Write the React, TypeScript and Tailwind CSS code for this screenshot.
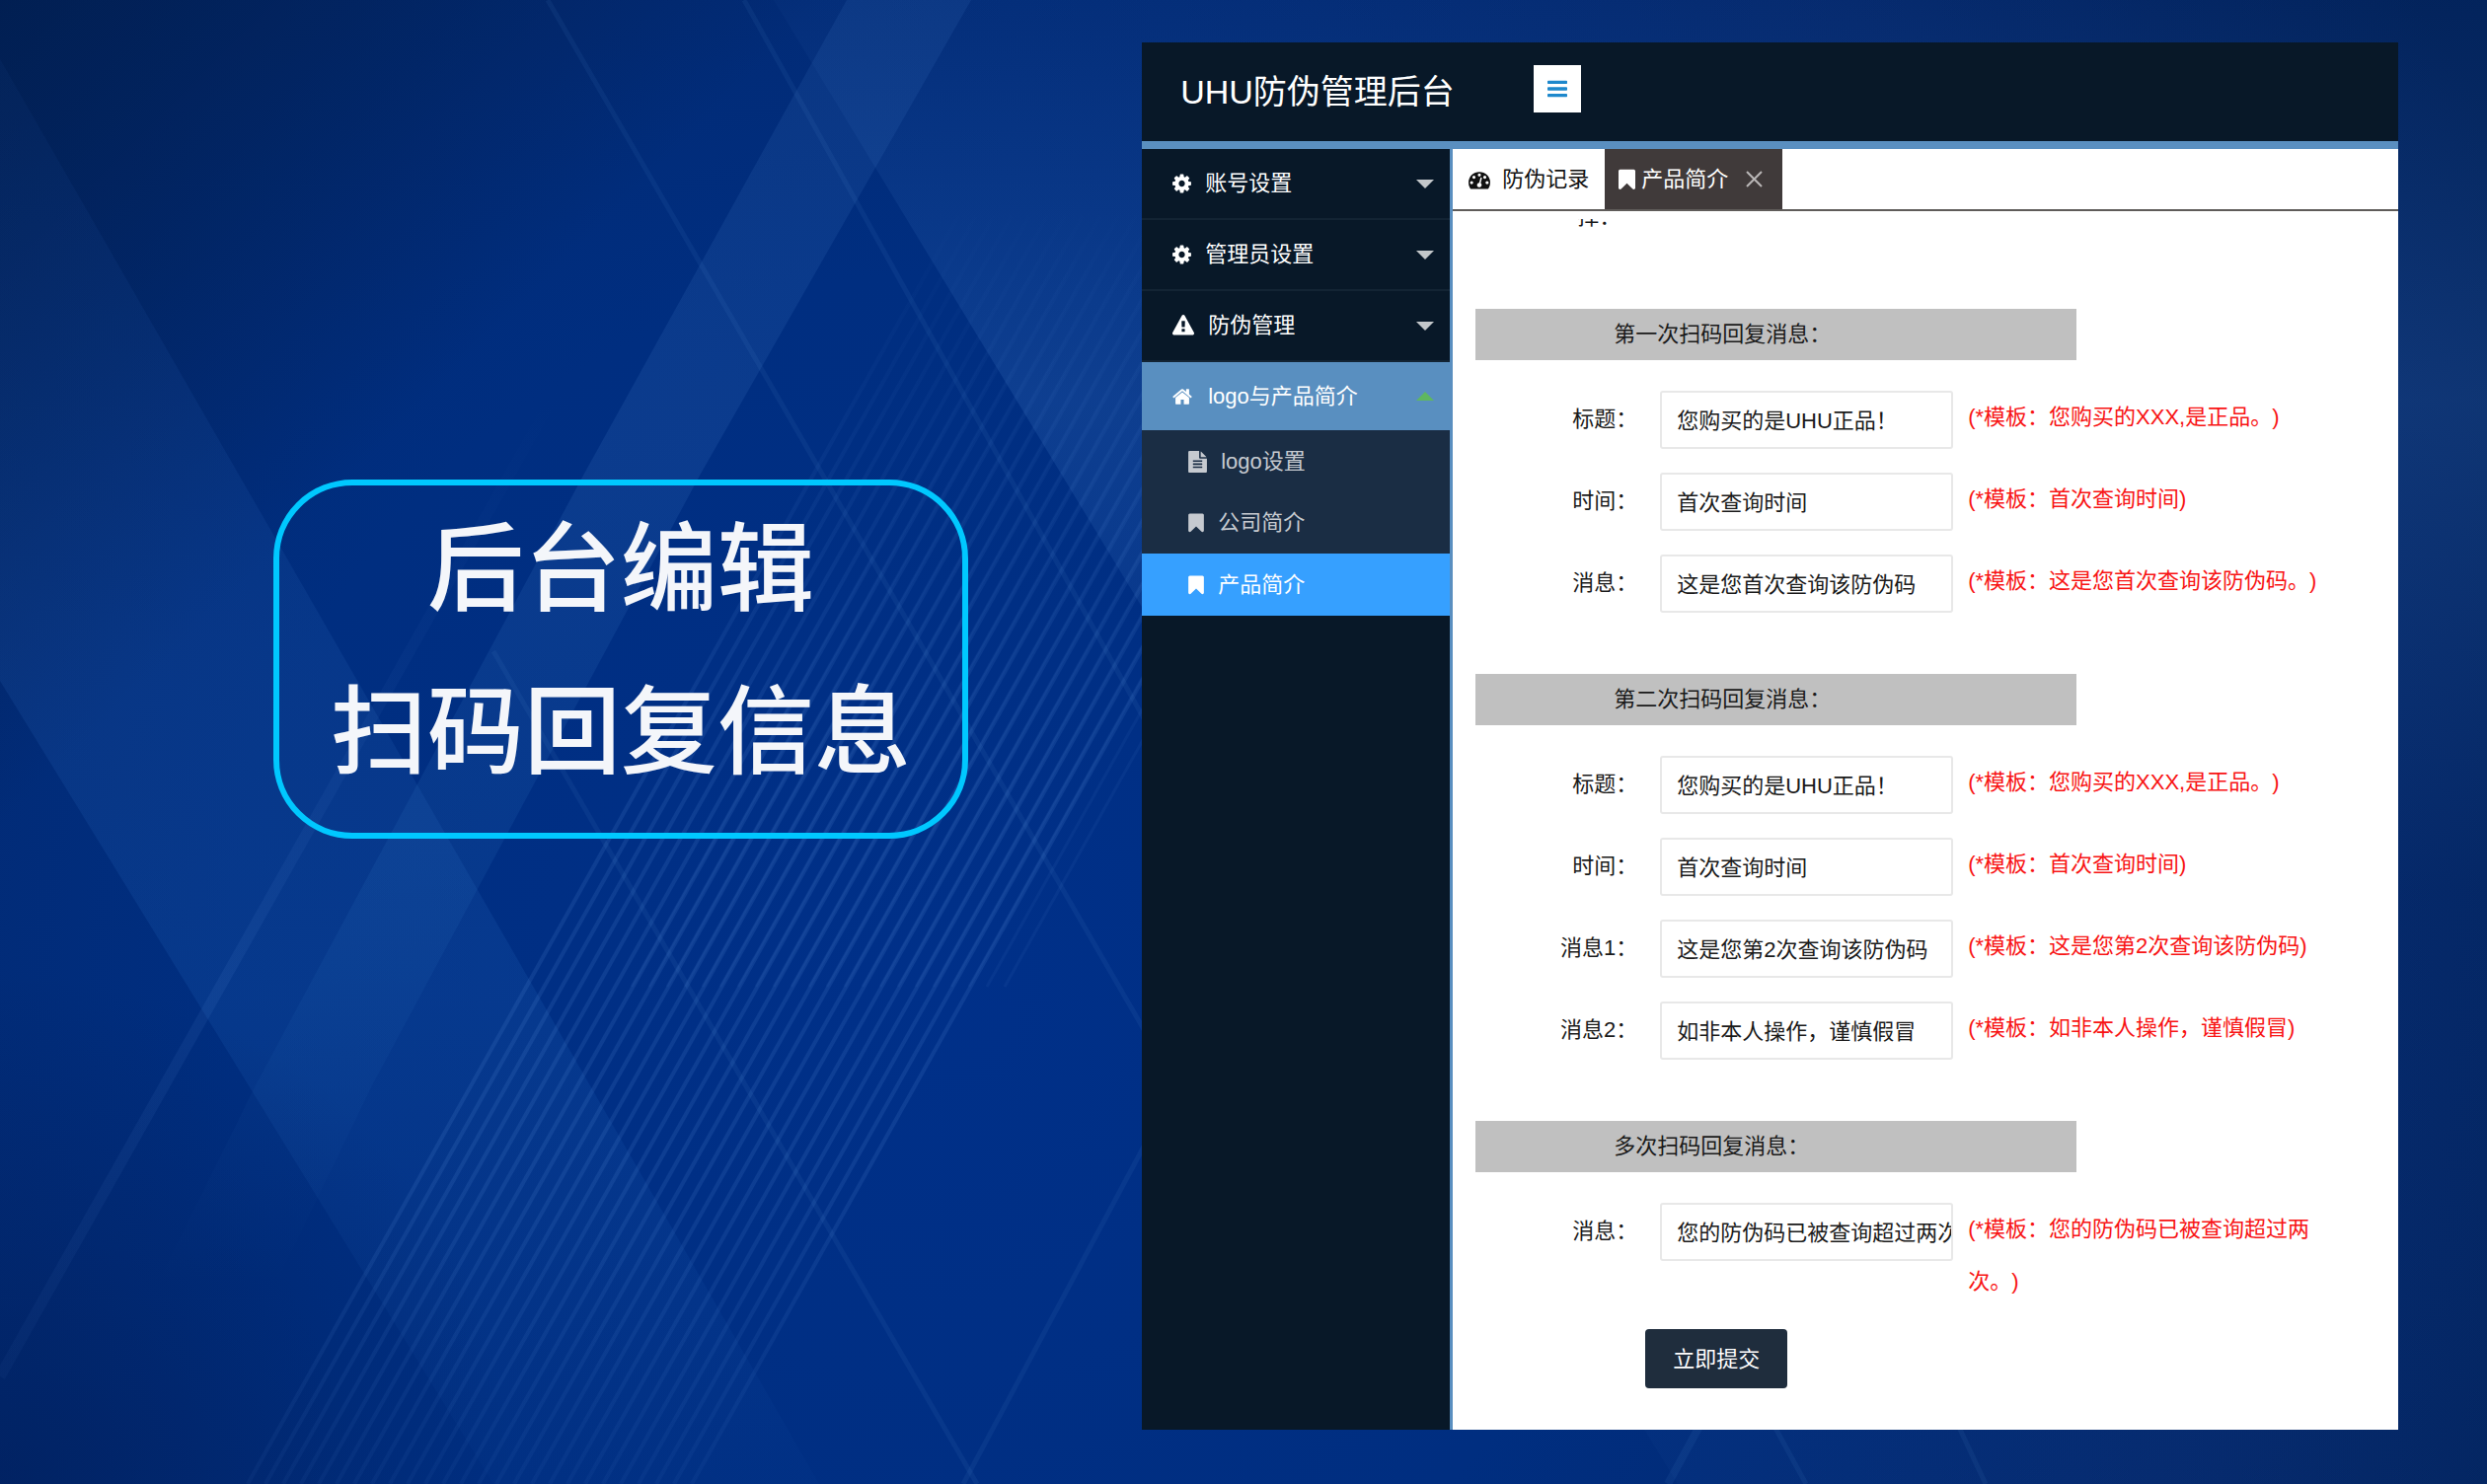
import { useId } from "react";

type IconShape = { box: string; path: string };

const cog: IconShape = {
  box: "128 0 1536 1792",
  path: "M1152 896q0-106-75-181t-181-75-181 75-75 181 75 181 181 75 181-75 75-181zm512-109v222q0 12-8 23t-20 13l-185 28q-19 54-39 91 35 50 107 138 10 12 10 25t-9 23q-27 37-99 108t-94 71q-12 0-26-9l-138-108q-44 23-91 38-16 136-29 186-7 28-36 28h-222q-14 0-24.5-8.5t-11.5-21.5l-28-184q-49-16-90-37l-141 107q-10 9-25 9-14 0-25-11-126-114-165-168-7-10-7-23 0-12 8-23 15-21 51-66.5t54-70.5q-27-50-41-99l-183-27q-13-2-21-12.5t-8-23.5v-222q0-12 8-23t19-13l186-28q14-46 39-92-40-57-107-138-10-12-10-24 0-10 9-23 26-36 98.5-107.5t94.5-71.5q13 0 26 10l138 107q44-23 91-38 16-136 29-186 7-28 36-28h222q14 0 24.5 8.5t11.5 21.5l28 184q49 16 90 37l142-107q9-9 24-9 13 0 25 10 129 119 165 170 7 8 7 22 0 12-8 23-15 21-51 66.5t-54 70.5q26 50 41 98l183 28q13 2 21 12.5t8 23.5z",
};
const bars: IconShape = {
  box: "128 0 1536 1792",
  path: "M1664 1344v128q0 26-19 45t-45 19h-1408q-26 0-45-19t-19-45v-128q0-26 19-45t45-19h1408q26 0 45 19t19 45zm0-512v128q0 26-19 45t-45 19h-1408q-26 0-45-19t-19-45v-128q0-26 19-45t45-19h1408q26 0 45 19t19 45zm0-512v128q0 26-19 45t-45 19h-1408q-26 0-45-19t-19-45v-128q0-26 19-45t45-19h1408q26 0 45 19t19 45z",
};
const bookmark: IconShape = {
  box: "256 0 1280 1792",
  path: "M1420 128q23 0 44 9 33 13 52.5 41t19.5 62v1289q0 34-19.5 62t-52.5 41q-19 8-44 8-48 0-83-32l-441-424-441 424q-36 33-83 33-23 0-44-9-33-13-52.5-41t-19.5-62v-1289q0-34 19.5-62t52.5-41q21-9 44-9h1048z",
};
const home: IconShape = {
  box: "64 0 1664 1792",
  path: "M1472 992v480q0 26-19 45t-45 19h-384v-384h-256v384h-384q-26 0-45-19t-19-45v-480q0-1 .5-3t.5-3l575-474 575 474q1 2 1 6zm223-69l-62 74q-8 9-21 11h-3q-13 0-21-7l-692-577-692 577q-12 8-24 7-13-2-21-11l-62-74q-8-10-7-23.5t11-21.5l719-599q32-26 76-26t76 26l244 204v-195q0-14 9-23t23-9h192q14 0 23 9t9 23v408l219 182q10 8 11 21.5t-7 23.5z",
};
const warning: IconShape = {
  box: "0 0 1792 1792",
  path: "M1024 1375v-190q0-14-9.5-23.5t-22.5-9.5h-192q-13 0-22.5 9.5t-9.5 23.5v190q0 14 9.5 23.5t22.5 9.5h192q13 0 22.5-9.5t9.5-23.5zm-2-374l18-459q0-12-10-19-13-11-24-11h-220q-11 0-24 11-10 7-10 21l17 457q0 10 10 16.5t24 6.5h185q14 0 23.5-6.5t10.5-16.5zm-14-934l768 1408q35 63-2 126-17 29-46.5 46t-63.5 17h-1536q-34 0-63.5-17t-46.5-46q-37-63-2-126l768-1408q17-31 47-49t65-18 65 18 47 49z",
};
const fileText: IconShape = {
  box: "128 0 1536 1792",
  path: "M1596 476q14 14 28 36h-472v-472q22 14 36 28zm-476 164h544v1056q0 40-28 68t-68 28h-1344q-40 0-68-28t-28-68v-1600q0-40 28-68t68-28h800v544q0 40 28 68t68 28zm160 736v-64q0-14-9-23t-23-9h-704q-14 0-23 9t-9 23v64q0 14 9 23t23 9h704q14 0 23-9t9-23zm0-256v-64q0-14-9-23t-23-9h-704q-14 0-23 9t-9 23v64q0 14 9 23t23 9h704q14 0 23-9t9-23zm0-256v-64q0-14-9-23t-23-9h-704q-14 0-23 9t-9 23v64q0 14 9 23t23 9h704q14 0 23-9t9-23z",
};
const tachometer: IconShape = {
  box: "0 0 1792 1792",
  path: "M384 1152q0-53-37.5-90.5t-90.5-37.5-90.5 37.5-37.5 90.5 37.5 90.5 90.5 37.5 90.5-37.5 37.5-90.5zm192-448q0-53-37.5-90.5t-90.5-37.5-90.5 37.5-37.5 90.5 37.5 90.5 90.5 37.5 90.5-37.5 37.5-90.5zm428 481l101-382q6-26-7.5-48.5t-38.5-29.5-48 6.5-30 39.5l-101 382q-60 5-107 43.5t-63 98.5q-20 77 20 146t117 89 146-20 89-117q16-60-6-117t-72-91zm660-33q0-53-37.5-90.5t-90.5-37.5-90.5 37.5-37.5 90.5 37.5 90.5 90.5 37.5 90.5-37.5 37.5-90.5zm-640-640q0-53-37.5-90.5t-90.5-37.5-90.5 37.5-37.5 90.5 37.5 90.5 90.5 37.5 90.5-37.5 37.5-90.5zm448 192q0-53-37.5-90.5t-90.5-37.5-90.5 37.5-37.5 90.5 37.5 90.5 90.5 37.5 90.5-37.5 37.5-90.5zm320 448q0 261-141 483-19 29-54 29h-1402q-35 0-54-29-141-221-141-483 0-182 71-348t191-286 286-191 348-71 348 71 286 191 191 286 71 348z",
};

function Icon({ shape, className }: { shape: IconShape; className: string }) {
  return (
    <svg viewBox={shape.box} className={className} fill="currentColor" aria-hidden="true">
      <path d={shape.path} />
    </svg>
  );
}

/* Diagonal light beams and fine hatching behind the page */
function Backdrop() {
  const hatch = Array.from({ length: 26 }, (_, i) => 251 + i * 18);
  const fine = Array.from({ length: 22 }, (_, i) => 640 + i * 18);
  return (
    <svg
      className="absolute inset-0 h-full w-full"
      viewBox="0 0 2520 1504"
      preserveAspectRatio="xMidYMid slice"
      aria-hidden="true"
    >
      <defs>
        <radialGradient id="base" gradientUnits="userSpaceOnUse" cx="950" cy="1000" r="1800">
          <stop offset="0" stopColor="#003089" />
          <stop offset="0.4" stopColor="#002e80" />
          <stop offset="0.75" stopColor="#04286c" />
          <stop offset="1" stopColor="#002058" />
        </radialGradient>
        <linearGradient id="corner" gradientUnits="userSpaceOnUse" x1="0" y1="0" x2="420" y2="420">
          <stop offset="0" stopColor="#001c4a" stopOpacity="0.75" />
          <stop offset="1" stopColor="#001c4a" stopOpacity="0" />
        </linearGradient>
        <linearGradient id="leftWedge" gradientUnits="userSpaceOnUse" x1="0" y1="100" x2="0" y2="1504">
          <stop offset="0" stopColor="#2a62b8" stopOpacity="0.06" />
          <stop offset="0.4" stopColor="#2a66b8" stopOpacity="0.17" />
          <stop offset="0.65" stopColor="#1a5ab0" stopOpacity="0.24" />
          <stop offset="1" stopColor="#1a5ab0" stopOpacity="0.04" />
        </linearGradient>
        <linearGradient id="beam" gradientUnits="userSpaceOnUse" x1="0" y1="0" x2="0" y2="1300">
          <stop offset="0" stopColor="#3f78c4" stopOpacity="0.14" />
          <stop offset="0.35" stopColor="#3f78c4" stopOpacity="0.18" />
          <stop offset="0.68" stopColor="#2f78c4" stopOpacity="0.14" />
          <stop offset="1" stopColor="#2f78c4" stopOpacity="0" />
        </linearGradient>
        <linearGradient id="rightWedge" gradientUnits="userSpaceOnUse" x1="0" y1="0" x2="0" y2="900">
          <stop offset="0" stopColor="#3f78c4" stopOpacity="0.04" />
          <stop offset="0.45" stopColor="#3f78c4" stopOpacity="0.22" />
          <stop offset="1" stopColor="#3f78c4" stopOpacity="0.04" />
        </linearGradient>
        <linearGradient id="lines" gradientUnits="userSpaceOnUse" x1="0" y1="200" x2="0" y2="1504">
          <stop offset="0" stopColor="#6aa0ea" stopOpacity="0" />
          <stop offset="0.45" stopColor="#6aa0ea" stopOpacity="0.13" />
          <stop offset="0.75" stopColor="#6aa0ea" stopOpacity="0.13" />
          <stop offset="1" stopColor="#6aa0ea" stopOpacity="0.05" />
        </linearGradient>
        <linearGradient id="longLine" gradientUnits="userSpaceOnUse" x1="0" y1="400" x2="0" y2="1395">
          <stop offset="0" stopColor="#6aa0ea" stopOpacity="0" />
          <stop offset="0.6" stopColor="#6aa0ea" stopOpacity="0.09" />
          <stop offset="1" stopColor="#6aa0ea" stopOpacity="0.04" />
        </linearGradient>
        <radialGradient id="shade" gradientUnits="userSpaceOnUse" cx="0" cy="1504" r="520">
          <stop offset="0" stopColor="#001c55" stopOpacity="0.55" />
          <stop offset="1" stopColor="#001c55" stopOpacity="0" />
        </radialGradient>
      </defs>
      <rect width="2520" height="1504" fill="url(#base)" />
      <rect width="2520" height="1504" fill="url(#corner)" />
      <path d="M0 60 L830 1504 L500 1504 L0 690Z" fill="url(#leftWedge)" />
      <path d="M858 0 H984 L710 480 L377 1100 L280 1300 H160 L259 1100 L592 480Z" fill="url(#beam)" />
      <path d="M784 0 H2520 V1504 H1700 L1160 620Z" fill="url(#rightWedge)" />
      <rect width="2520" height="1504" fill="url(#shade)" />
      <g fill="none" stroke="url(#lines)" strokeWidth="4">
        {hatch.map((x) => (
          <path key={x} d={`M${x} 1504 L${x + 720} 219`} />
        ))}
      </g>
      <g fill="none" stroke="url(#lines)" strokeWidth="3" opacity="0.5">
        {fine.map((x) => (
          <path key={x} d={`M${x} 1000 L${x + 448} 200`} />
        ))}
      </g>
      <g fill="none" stroke="#6aa0ea" strokeOpacity="0.08" strokeWidth="5">
        <path d="M555 0 L1160 1045" />
        <path d="M754 0 L1160 730" />
        <path d="M500 660 L990 1504" />
        <path d="M1160 1160 L976 1504" />
        <path strokeWidth="8" d="M1725 1440 L1690 1504" />
        <path d="M1795 1440 L1830 1504" />
        <path d="M1982 1440 L2012 1504" />
      </g>
      <path d="M562 400 L0 1395" fill="none" stroke="url(#longLine)" strokeWidth="11" />
    </svg>
  );
}

function Caret({ up = false }: { up?: boolean }) {
  return (
    <svg
      viewBox="0 0 18 9"
      className={up ? "ml-auto h-[9px] w-[18px] text-[#5fb760]" : "ml-auto h-[9px] w-[18px] text-[#c3c7ca]"}
      fill="currentColor"
      aria-hidden="true"
    >
      <path d={up ? "M0 9 L9 0 L18 9Z" : "M0 0 H18 L9 9Z"} />
    </svg>
  );
}

const groups = [
  { text: "账号设置", icon: cog, size: "h-[22px] w-[19px]" },
  { text: "管理员设置", icon: cog, size: "h-[22px] w-[19px]" },
  { text: "防伪管理", icon: warning, size: "h-[22px] w-[22px]" },
];

function Sidebar() {
  return (
    <nav className="w-[315px] shrink-0 border-r-[3px] border-[#5a8fc0] bg-[#081828] text-[22px] leading-8 text-white">
      {groups.map((g) => (
        <button
          key={g.text}
          type="button"
          className="flex h-[72px] w-full items-center gap-3.5 border-b-2 border-[#132434] pr-4 pl-[31px]"
        >
          <Icon shape={g.icon} className={g.size} />
          {g.text}
          <Caret />
        </button>
      ))}
      <button
        type="button"
        aria-expanded="true"
        className="flex h-[69px] w-full items-center gap-4 bg-[#598fc0] pr-4 pl-[31px]"
      >
        <Icon shape={home} className="h-[22px] w-[20px]" />
        logo与产品简介
        <Caret up />
      </button>
      <ul>
        <li>
          <a href="#logo" className="flex h-[63px] items-center gap-3.5 bg-[#1a2d44] pl-[47px] text-[#c6cad0]">
            <Icon shape={fileText} className="h-[22px] w-[19px]" />
            logo设置
          </a>
        </li>
        <li>
          <a href="#company" className="flex h-[62px] items-center gap-3.5 bg-[#1a2d44] pl-[47px] text-[#c6cad0]">
            <Icon shape={bookmark} className="h-[22px] w-[16px]" />
            公司简介
          </a>
        </li>
        <li>
          <a href="#product" aria-current="page" className="flex h-[63px] items-center gap-3.5 bg-[#36a0ff] pl-[47px]">
            <Icon shape={bookmark} className="h-[22px] w-[16px]" />
            产品简介
          </a>
        </li>
      </ul>
    </nav>
  );
}

function Tabs() {
  return (
    <div className="flex h-[63px] border-b-2 border-[#5f5c5a] text-[22px] text-[#111]">
      <button type="button" className="flex items-center gap-3 px-4">
        <Icon shape={tachometer} className="h-[22px] w-[22px]" />
        防伪记录
      </button>
      <div className="flex items-center bg-[#403a3a] pr-5 pl-3.5 text-white">
        <button type="button" className="flex items-center gap-1.5">
          <Icon shape={bookmark} className="h-[24px] w-[17px]" />
          产品简介
        </button>
        <button type="button" aria-label="关闭" className="ml-[18px]">
          <svg viewBox="0 0 17 17" className="h-[17px] w-[17px]" fill="none" stroke="#b9b6b6" strokeWidth="2" aria-hidden="true">
            <path d="M1 1 L16 16 M16 1 L1 16" />
          </svg>
        </button>
      </div>
    </div>
  );
}

type Field = { label: string; value: string; hint: string };

function FieldRow({ label, value, hint }: Field) {
  const id = useId();
  return (
    <div className="flex items-start">
      <label htmlFor={id} className="w-[187px] shrink-0 text-right leading-[58px]">
        {label}
      </label>
      <input
        id={id}
        type="text"
        defaultValue={value}
        className="ml-[23px] h-[59px] w-[297px] shrink-0 rounded-[3px] border-2 border-[#e8e8e8] pb-1 pl-[15px]"
      />
      <p className="ml-[15px] max-w-[362px] leading-[53px] text-[#f81414]">{hint}</p>
    </div>
  );
}

const sections: { title: string; fields: Field[] }[] = [
  {
    title: "第一次扫码回复消息：",
    fields: [
      { label: "标题：", value: "您购买的是UHU正品！", hint: "(*模板：您购买的XXX,是正品。)" },
      { label: "时间：", value: "首次查询时间", hint: "(*模板：首次查询时间)" },
      { label: "消息：", value: "这是您首次查询该防伪码", hint: "(*模板：这是您首次查询该防伪码。)" },
    ],
  },
  {
    title: "第二次扫码回复消息：",
    fields: [
      { label: "标题：", value: "您购买的是UHU正品！", hint: "(*模板：您购买的XXX,是正品。)" },
      { label: "时间：", value: "首次查询时间", hint: "(*模板：首次查询时间)" },
      { label: "消息1：", value: "这是您第2次查询该防伪码", hint: "(*模板：这是您第2次查询该防伪码)" },
      { label: "消息2：", value: "如非本人操作，谨慎假冒", hint: "(*模板：如非本人操作，谨慎假冒)" },
    ],
  },
  {
    title: "多次扫码回复消息：",
    fields: [
      { label: "消息：", value: "您的防伪码已被查询超过两次。", hint: "(*模板：您的防伪码已被查询超过两次。)" },
    ],
  },
];

function ReplyForm() {
  return (
    <form className="mt-2 pb-[42px] text-[22px] text-[#1a1a1a]">
      {/* the row scrolled half out of view under the tab strip */}
      <div className="h-[91px] overflow-hidden pl-[126px]">
        <p className="-mt-[18px] leading-8">择：</p>
      </div>
      <div className="flex flex-col gap-[62px]">
        {sections.map((s) => (
          <section key={s.title}>
            <h2 className="ml-[23px] w-[609px] bg-[#c0c0c0] pl-[140px] leading-[52px]">{s.title}</h2>
            <div className="mt-[31px] flex flex-col gap-6">
              {s.fields.map((f) => (
                <FieldRow key={f.label} {...f} />
              ))}
            </div>
          </section>
        ))}
      </div>
      <button
        type="button"
        className="mt-[22px] ml-[195px] h-[60px] rounded-[4px] bg-[#1f2d3d] px-7 text-white"
      >
        立即提交
      </button>
    </form>
  );
}

export default function App() {
  return (
    <div className="relative min-h-screen bg-[#002d7f] font-['Liberation_Sans','Noto_Sans_CJK_SC',sans-serif] [text-spacing-trim:space-all]">
      <Backdrop />
      <div className="relative grid grid-cols-[10fr_11fr] items-start pt-[43px] pr-[90px] pb-[55px]">
        <div className="mt-[443px] mr-[176px] ml-[277px] rounded-[80px] border-6 border-[#00c8ff] pb-7">
          <h1 className="-mt-1.5 text-center font-['Noto_Sans_CJK_SC',sans-serif] text-[98px] leading-[165px] font-medium text-[#f4f6fa]">
            后台编辑
            <br />
            扫码回复信息
          </h1>
        </div>
        <main className="bg-white">
          <header className="flex h-[108px] items-center border-b-8 border-[#5a8fc0] bg-[#081828] pl-[39px]">
            <p className="text-[34px] leading-[48px] whitespace-nowrap text-white">UHU防伪管理后台</p>
            <button
              type="button"
              aria-label="菜单"
              className="mb-1.5 ml-20 flex size-12 shrink-0 items-center justify-center bg-white text-[#1e88cc]"
            >
              <Icon shape={bars} className="h-[24px] w-[20px]" />
            </button>
          </header>
          <div className="flex">
            <Sidebar />
            <div className="min-w-0 flex-1">
              <Tabs />
              <ReplyForm />
            </div>
          </div>
        </main>
      </div>
    </div>
  );
}
